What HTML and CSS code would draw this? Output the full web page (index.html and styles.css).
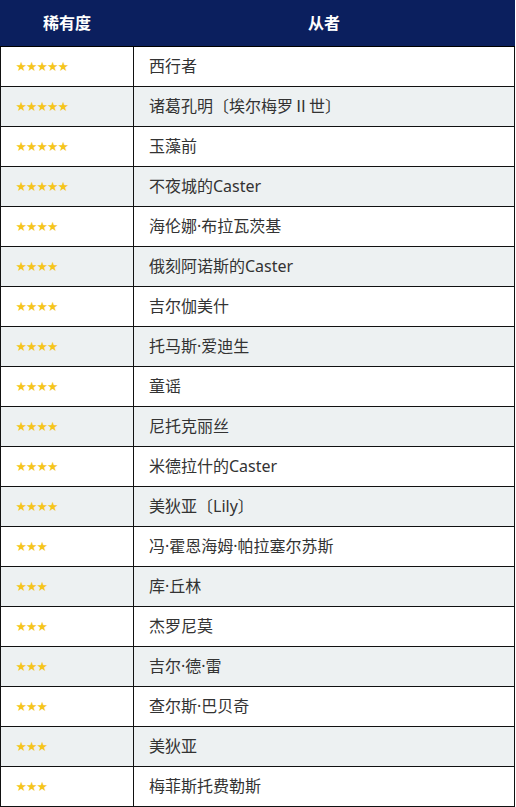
FILE: index.html
```html
<!DOCTYPE html>
<html lang="zh-CN">
<head>
<meta charset="utf-8">
<link rel="stylesheet" href="styles.css">
</head>
<body>
<table class="servants">
  <thead>
    <tr><th class="col-rarity">稀有度</th><th class="col-name">从者</th></tr>
  </thead>
  <tbody>
    <tr><td class="stars">★★★★★</td><td>西行者</td></tr>
    <tr class="alt"><td class="stars">★★★★★</td><td>诸葛孔明〔埃尔梅罗Ⅱ世〕</td></tr>
    <tr><td class="stars">★★★★★</td><td>玉藻前</td></tr>
    <tr class="alt"><td class="stars">★★★★★</td><td>不夜城的Caster</td></tr>
    <tr><td class="stars">★★★★</td><td>海伦娜·布拉瓦茨基</td></tr>
    <tr class="alt"><td class="stars">★★★★</td><td>俄刻阿诺斯的Caster</td></tr>
    <tr><td class="stars">★★★★</td><td>吉尔伽美什</td></tr>
    <tr class="alt"><td class="stars">★★★★</td><td>托马斯·爱迪生</td></tr>
    <tr><td class="stars">★★★★</td><td>童谣</td></tr>
    <tr class="alt"><td class="stars">★★★★</td><td>尼托克丽丝</td></tr>
    <tr><td class="stars">★★★★</td><td>米德拉什的Caster</td></tr>
    <tr class="alt"><td class="stars">★★★★</td><td>美狄亚〔Lily〕</td></tr>
    <tr><td class="stars">★★★</td><td>冯·霍恩海姆·帕拉塞尔苏斯</td></tr>
    <tr class="alt"><td class="stars">★★★</td><td>库·丘林</td></tr>
    <tr><td class="stars">★★★</td><td>杰罗尼莫</td></tr>
    <tr class="alt"><td class="stars">★★★</td><td>吉尔·德·雷</td></tr>
    <tr><td class="stars">★★★</td><td>查尔斯·巴贝奇</td></tr>
    <tr class="alt"><td class="stars">★★★</td><td>美狄亚</td></tr>
    <tr><td class="stars">★★★</td><td>梅菲斯托费勒斯</td></tr>
  </tbody>
</table>
</body>
</html>
```
FILE: styles.css
```css
html, body {
  margin: 0;
  padding: 0;
  background: #ffffff;
}
.servants {
  width: 515px;
  border-collapse: collapse;
  table-layout: fixed;
  font-family: "Noto Sans", "Noto Sans CJK SC", sans-serif;
}
.servants th {
  background: #0b1f5e;
  color: #ffffff;
  font-family: "Noto Sans CJK SC", sans-serif;
  font-size: 16px;
  line-height: 20px;
  font-weight: bold;
  height: 41px;
  padding: 0 0 4px 0;
  text-align: center;
  border: 1px solid #0b1f5e;
  border-bottom: 1px solid #000;
}
.col-rarity {
  width: 132px;
}
.servants td {
  height: 38px;
  line-height: 18px;
  padding: 0 0 1px 15px;
  border: 1px solid #111;
  font-size: 16px;
  color: #333;
  text-align: left;
}
.servants tr.alt td {
  background: #edf1f2;
}
.servants td.stars {
  color: #f5c51c;
  font-family: "Noto Sans CJK SC", sans-serif;
  font-size: 10.5px;
  letter-spacing: 0;
}
```
